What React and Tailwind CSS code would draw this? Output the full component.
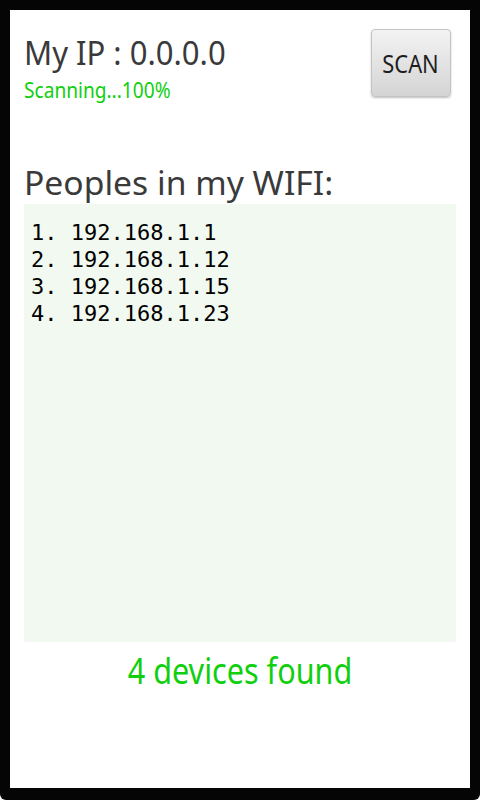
import React from 'react';

const devices = ['192.168.1.1', '192.168.1.12', '192.168.1.15', '192.168.1.23'];

const App = () => {
  return (
    <div className="w-[480px] h-[800px] bg-[#050505] rounded-b-[6px] pl-[10px] pt-[10px] pr-[10px] pb-[12px]">
      {/* screen */}
      <div
        className="h-full w-full bg-white flex flex-col px-[14px]"
        style={{ fontFamily: '"Noto Sans", "Open Sans", sans-serif' }}
      >
        {/* header row */}
        <div className="flex justify-between items-start pt-[19px]">
          <div className="flex flex-col">
            <div className="mt-[3px] text-[33px] leading-[42px] text-[#3a3a3a] origin-left scale-x-[0.94]">My IP : 0.0.0.0</div>
            <div className="mt-[3px] text-[21px] leading-[26px] text-[#0fcf0f] origin-left scale-x-[0.91]">Scanning...100%</div>
          </div>
          <button className="w-[80px] h-[68px] mr-[5px] rounded-[4px] border border-[#c4c4c4] bg-gradient-to-b from-[#f3f3f3] to-[#d4d4d4] shadow-[0_1px_2px_rgba(0,0,0,0.25)] text-[26px] text-[#1e1e1e] flex items-center justify-center">
            <span className="scale-x-[0.84]">SCAN</span>
          </button>
        </div>

        <div className="mt-[60px] text-[33px] leading-[40px] text-[#3a3a3a] origin-left scale-x-[1.02]">Peoples in my WIFI:</div>

        {/* device list */}
        <div
          className="mt-[1px] h-[438px] bg-[#f2f9f1] pt-[15px] pl-[7px] text-[22px] leading-[27px] text-black"
          style={{ fontFamily: '"DejaVu Sans Mono", "Liberation Mono", monospace' }}
        >
          {devices.map((ip, i) => (
            <div key={ip}>{`${i + 1}. ${ip}`}</div>
          ))}
        </div>

        <div className="mt-[7px] text-center text-[36px] leading-[44px] text-[#0fcf0f] scale-x-[0.85]">4 devices found</div>
      </div>
    </div>
  );
};

export default App;
